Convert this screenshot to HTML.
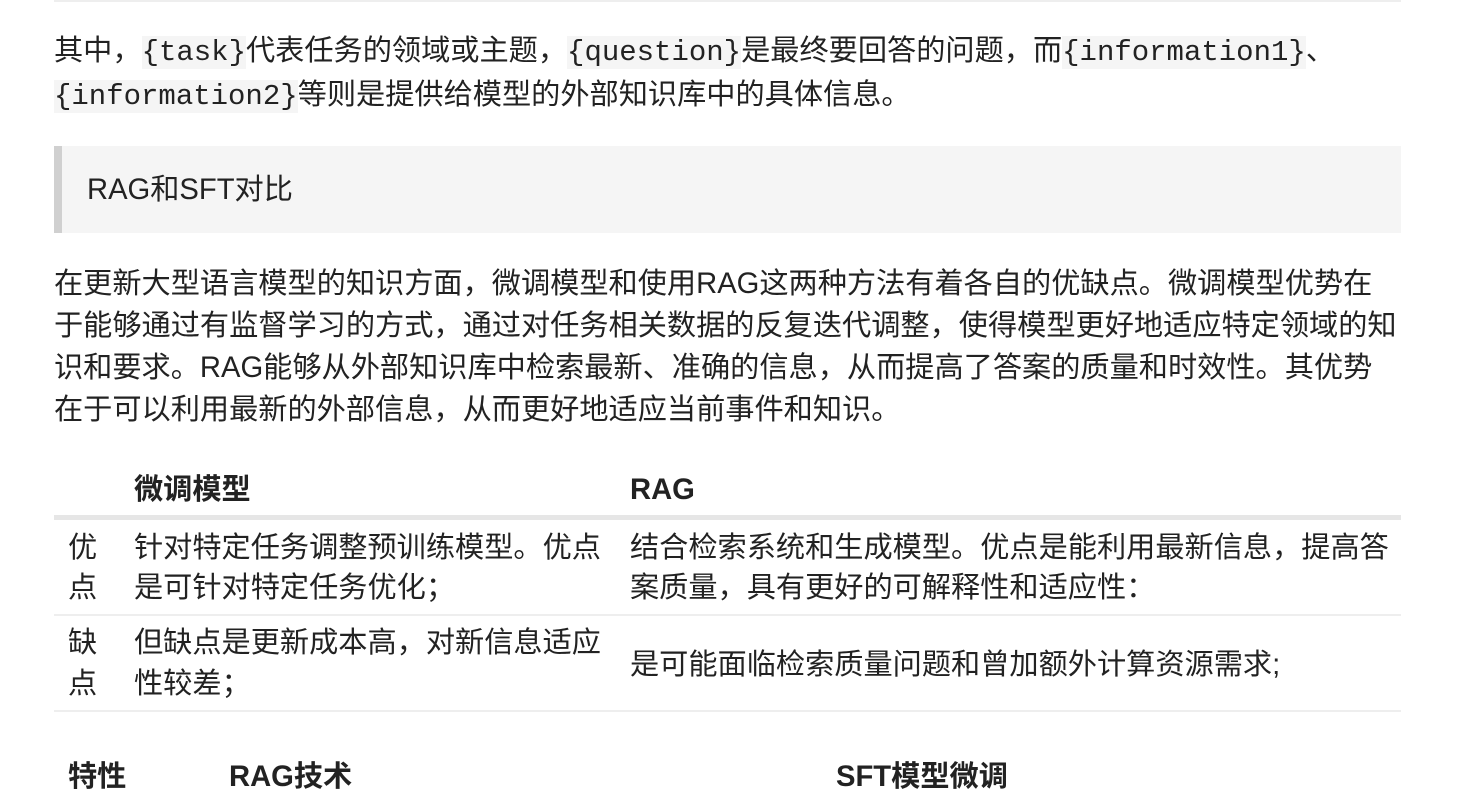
<!DOCTYPE html>
<html><head><meta charset="utf-8"><style>
body{margin:0;width:1467px;height:796px;overflow:hidden;background:#fff;font-family:"Liberation Sans","Noto Sans CJK SC",sans-serif;color:#222;font-size:29.2px;position:relative}
.a{position:absolute;white-space:nowrap;line-height:30px}
code{font-family:"Liberation Mono","DejaVu Sans Mono",monospace;background:#f5f5f5;font-size:29px;padding:0}
.b{font-weight:bold}
.hr{position:absolute;left:54px;width:1347px}
</style></head><body>
<div class="hr" style="top:0;height:2px;background:#eee"></div>
<div class="a" style="left:54px;top:36px">其中，<code>{task}</code>代表任务的领域或主题，<code>{question}</code>是最终要回答的问题，而<code>{information1}</code>、</div>
<div class="a" style="left:54px;top:80px"><code>{information2}</code>等则是提供给模型的外部知识库中的具体信息。</div>
<div class="hr" style="top:146px;height:87px;background:#f5f5f5;border-left:8px solid #d0d0d0;box-sizing:border-box"></div>
<div class="a" style="left:87px;top:175px">RAG和SFT对比</div>
<div class="a" style="left:54px;top:269px">在更新大型语言模型的知识方面，微调模型和使用RAG这两种方法有着各自的优缺点。微调模型优势在</div>
<div class="a" style="left:54px;top:311px">于能够通过有监督学习的方式，通过对任务相关数据的反复迭代调整，使得模型更好地适应特定领域的知</div>
<div class="a" style="left:54px;top:353px">识和要求。RAG能够从外部知识库中检索最新、准确的信息，从而提高了答案的质量和时效性。其优势</div>
<div class="a" style="left:54px;top:395px">在于可以利用最新的外部信息，从而更好地适应当前事件和知识。</div>
<div class="a b" style="left:134px;top:475px">微调模型</div>
<div class="a b" style="left:630px;top:475px">RAG</div>
<div class="hr" style="top:515px;height:5px;background:#e6e6e6"></div>
<div class="a" style="left:68px;top:533px">优</div><div class="a" style="left:68px;top:573px">点</div>
<div class="a" style="left:134px;top:533px">针对特定任务调整预训练模型。优点</div>
<div class="a" style="left:134px;top:573px">是可针对特定任务优化；</div>
<div class="a" style="left:630px;top:533px">结合检索系统和生成模型。优点是能利用最新信息，提高答</div>
<div class="a" style="left:630px;top:573px">案质量，具有更好的可解释性和适应性：</div>
<div class="hr" style="top:614px;height:2px;background:#eee"></div>
<div class="a" style="left:68px;top:628px">缺</div><div class="a" style="left:68px;top:669px">点</div>
<div class="a" style="left:134px;top:628px">但缺点是更新成本高，对新信息适应</div>
<div class="a" style="left:134px;top:669px">性较差；</div>
<div class="a" style="left:630px;top:650px">是可能面临检索质量问题和曾加额外计算资源需求;</div>
<div class="hr" style="top:710px;height:2px;background:#eee"></div>
<div class="a b" style="left:68px;top:762px">特性</div>
<div class="a b" style="left:229px;top:762px">RAG技术</div>
<div class="a b" style="left:836px;top:762px">SFT模型微调</div>
</body></html>
